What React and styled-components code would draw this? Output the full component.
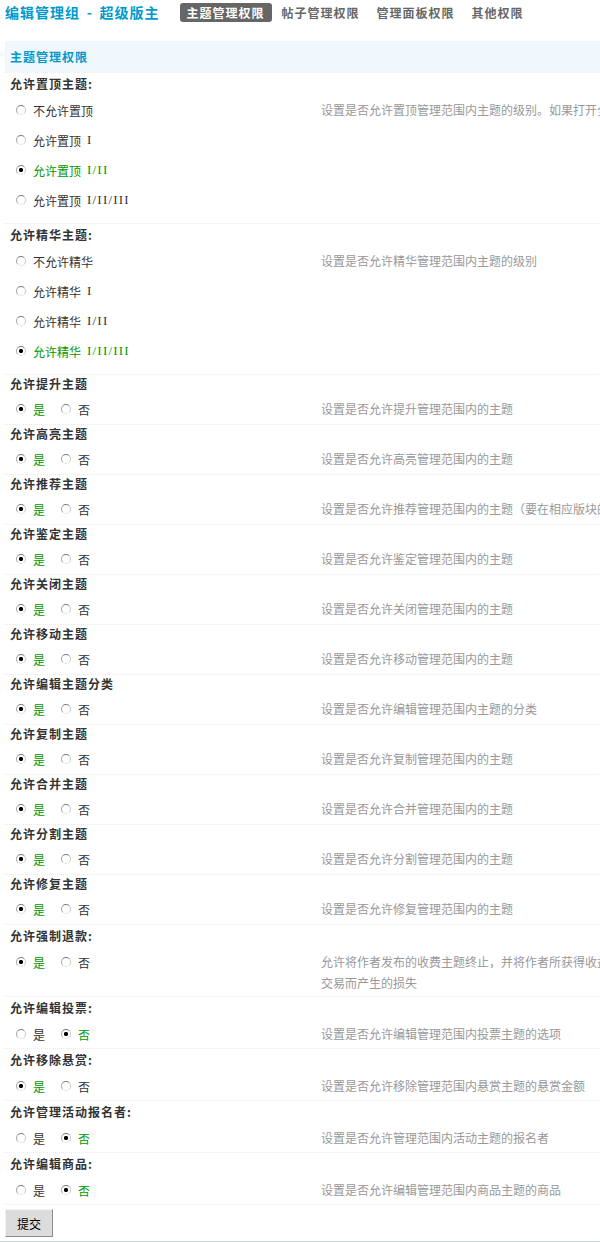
import React from 'react';
import styled, { createGlobalStyle } from 'styled-components';

const GlobalStyle = createGlobalStyle`
  html, body {
    margin: 0;
    padding: 0;
    background: #fff;
    overflow-x: hidden;
  }
  body {
    font: 12px "Noto Sans CJK SC", "Liberation Sans", sans-serif;
    color: #333;
  }
`;

const Page = styled.div`
  padding-left: 5px;
`;

// group name + permission tabs
const TopBar = styled.div`
  display: flex;
  align-items: center;
  height: 20px;
  padding-top: 2px;
  margin-bottom: 19px;
`;

const GroupTitle = styled.h3`
  margin: 0 20px 0 0;
  font-size: 14px;
  line-height: 20px;
  font-weight: bold;
  letter-spacing: 1px;
  word-spacing: 2.5px;
  color: #09c;
  white-space: nowrap;
`;

const Tabs = styled.ul`
  display: flex;
  gap: 3px;
  margin: 0;
  padding: 0;
  list-style: none;
`;

const Tab = styled.li`
  height: 19px;
  line-height: 19px;
  padding: 0 7px;
  border-radius: 3px;
  font-weight: bold;
  letter-spacing: 1px;
  white-space: nowrap;
  color: ${(p) => (p.$active ? '#fff' : '#666')};
  background: ${(p) => (p.$active ? '#666' : 'transparent')};
`;

const SectionHead = styled.div`
  height: 31px;
  line-height: 31px;
  padding-left: 5px;
  background: #f0f7fd;
  color: #09c;
  font-weight: bold;
  letter-spacing: 1px;
`;

// one setting: title line, then choices + tip
const Field = styled.div`
  border-top: 1px dotted #deeffb;
`;

const FieldTitle = styled.div`
  height: ${(p) => (p.$compact ? 18 : 22)}px;
  line-height: ${(p) => (p.$compact ? 18 : 22)}px;
  padding-left: 5px;
  font-weight: bold;
  letter-spacing: 1px;
  color: #333;
`;

const FieldBody = styled.div`
  display: grid;
  grid-template-columns: 311px 486px;
  align-items: start;
  padding-bottom: ${(p) => (p.$compact ? 4 : 3)}px;
`;

const Choices = styled.div`
  display: flex;
  flex-direction: ${(p) => (p.$stacked ? 'column' : 'row')};
  gap: ${(p) => (p.$stacked ? 0 : 16)}px;
  padding: ${(p) => (p.$stacked ? '0 0 5px' : p.$compact ? '5px 0 0' : '4px 0 0')};
  padding-left: 11px;
`;

const Choice = styled.label`
  display: flex;
  align-items: center;
  height: ${(p) => (p.$stacked ? 30 : 22)}px;
  white-space: nowrap;
  color: ${(p) => (p.$checked ? '#090' : '#333')};
`;

const Radio = styled.input.attrs({ type: 'radio' })`
  appearance: none;
  box-sizing: border-box;
  width: 10px;
  height: 10px;
  margin: 0 7px 0 0;
  border-radius: 50%;
  border: 1px solid;
  border-color: #7d7d7d #c8c8c8 #e4e4e4 #a4a4a4;
  background: #fff;

  &:checked {
    background: radial-gradient(circle, #000 0 1.8px, #fff 2.4px);
  }
`;

const Numeral = styled.span`
  margin-left: 6px;
  font: 13px "Liberation Serif", serif;
  letter-spacing: 1.2px;
`;

const Tip = styled.div`
  padding: ${(p) => (p.$compact ? 5 : 4)}px 0 0 5px;
  line-height: 21px;
  color: #999;
`;

const SubmitRow = styled.div`
  border-top: 1px dotted #deeffb;
  padding-top: 4px;
`;

const SubmitButton = styled.button`
  width: 48px;
  height: 28px;
  padding: 0;
  font: 12px "Noto Sans CJK SC", sans-serif;
  color: #000;
  background: #dcdcdc;
  border: 1px solid;
  border-color: #f2f2f2 #8c8c8c #8c8c8c #f2f2f2;
`;

const Footer = styled.div`
  margin-top: 4px;
  border-top: 1px solid #c4d6dc;
  height: 4px;
`;

const yesNo = (yes) => [
  { text: '是', checked: yes },
  { text: '否', checked: !yes },
];

const FIELDS = [
  {
    title: '允许置顶主题:',
    stacked: true,
    options: [
      { text: '不允许置顶' },
      { text: '允许置顶', num: 'I' },
      { text: '允许置顶', num: 'I/II', checked: true },
      { text: '允许置顶', num: 'I/II/III' },
    ],
    tip: '设置是否允许置顶管理范围内主题的级别。如果打开全局置顶，将同时在所有版块中显示',
  },
  {
    title: '允许精华主题:',
    stacked: true,
    options: [
      { text: '不允许精华' },
      { text: '允许精华', num: 'I' },
      { text: '允许精华', num: 'I/II' },
      { text: '允许精华', num: 'I/II/III', checked: true },
    ],
    tip: '设置是否允许精华管理范围内主题的级别',
  },
  { title: '允许提升主题', compact: true, options: yesNo(true), tip: '设置是否允许提升管理范围内的主题' },
  { title: '允许高亮主题', compact: true, options: yesNo(true), tip: '设置是否允许高亮管理范围内的主题' },
  {
    title: '允许推荐主题',
    compact: true,
    options: yesNo(true),
    tip: '设置是否允许推荐管理范围内的主题（要在相应版块的扩展设置中开启主题推荐功能）',
  },
  { title: '允许鉴定主题', compact: true, options: yesNo(true), tip: '设置是否允许鉴定管理范围内的主题' },
  { title: '允许关闭主题', compact: true, options: yesNo(true), tip: '设置是否允许关闭管理范围内的主题' },
  { title: '允许移动主题', compact: true, options: yesNo(true), tip: '设置是否允许移动管理范围内的主题' },
  { title: '允许编辑主题分类', compact: true, options: yesNo(true), tip: '设置是否允许编辑管理范围内主题的分类' },
  { title: '允许复制主题', compact: true, options: yesNo(true), tip: '设置是否允许复制管理范围内的主题' },
  { title: '允许合并主题', compact: true, options: yesNo(true), tip: '设置是否允许合并管理范围内的主题' },
  { title: '允许分割主题', compact: true, options: yesNo(true), tip: '设置是否允许分割管理范围内的主题' },
  { title: '允许修复主题', compact: true, options: yesNo(true), tip: '设置是否允许修复管理范围内的主题' },
  {
    title: '允许强制退款:',
    options: yesNo(true),
    tip: '允许将作者发布的收费主题终止，并将作者所获得收益退还给购买者，以弥补购买者因违规交易而产生的损失',
  },
  { title: '允许编辑投票:', options: yesNo(false), tip: '设置是否允许编辑管理范围内投票主题的选项' },
  { title: '允许移除悬赏:', options: yesNo(true), tip: '设置是否允许移除管理范围内悬赏主题的悬赏金额' },
  { title: '允许管理活动报名者:', options: yesNo(false), tip: '设置是否允许管理范围内活动主题的报名者' },
  { title: '允许编辑商品:', options: yesNo(false), tip: '设置是否允许编辑管理范围内商品主题的商品' },
];

const TABS = ['主题管理权限', '帖子管理权限', '管理面板权限', '其他权限'];

export default function App() {
  return (
    <>
      <GlobalStyle />
      <Page>
        <TopBar>
          <GroupTitle>编辑管理组 - 超级版主</GroupTitle>
          <Tabs>
            {TABS.map((t, i) => (
              <Tab key={t} $active={i === 0}>{t}</Tab>
            ))}
          </Tabs>
        </TopBar>

        <SectionHead>主题管理权限</SectionHead>

        {FIELDS.map((f, fi) => (
          <Field key={fi}>
            <FieldTitle $compact={f.compact}>{f.title}</FieldTitle>
            <FieldBody $compact={f.compact}>
              <Choices $stacked={f.stacked} $compact={f.compact}>
                {f.options.map((o, oi) => (
                  <Choice key={oi} $stacked={f.stacked} $checked={o.checked}>
                    <Radio name={`perm${fi}`} defaultChecked={!!o.checked} />
                    {o.text}
                    {o.num && <Numeral>{o.num}</Numeral>}
                  </Choice>
                ))}
              </Choices>
              <Tip $compact={f.compact}>{f.tip}</Tip>
            </FieldBody>
          </Field>
        ))}

        <SubmitRow>
          <SubmitButton type="button">提交</SubmitButton>
        </SubmitRow>
      </Page>
      <Footer />
    </>
  );
}
